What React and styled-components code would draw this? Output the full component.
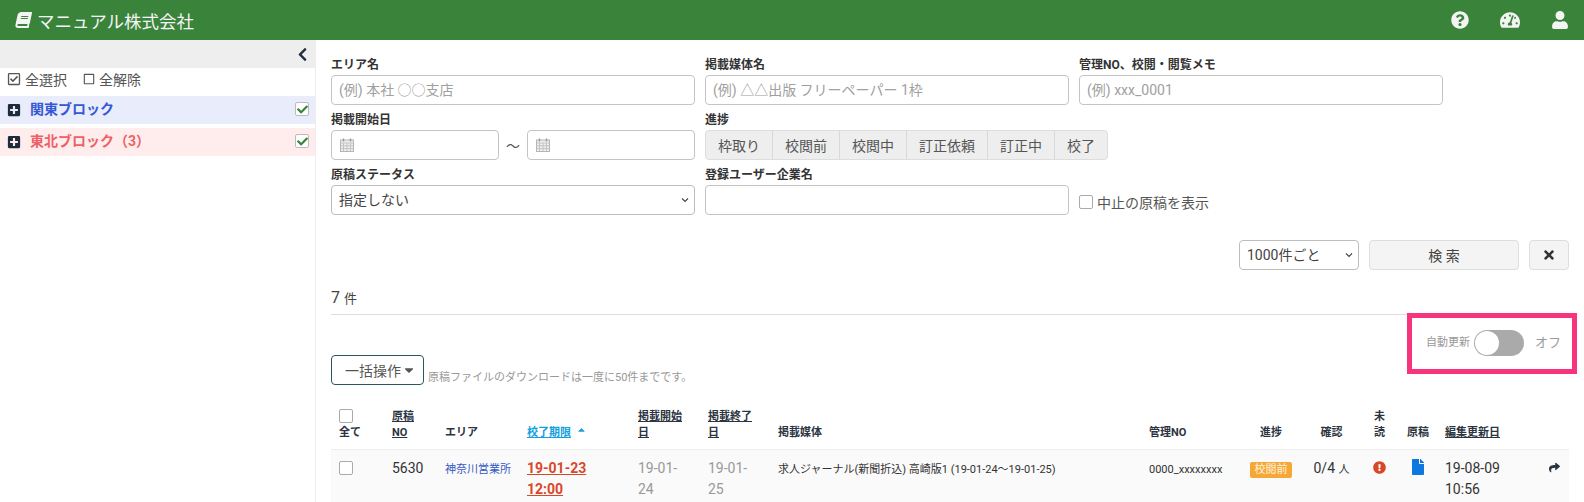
import styled, { createGlobalStyle } from "styled-components";
import {
  FaBook,
  FaCaretDown,
  FaCheck,
  FaChevronLeft,
  FaExclamationCircle,
  FaFile,
  FaPlusSquare,
  FaQuestionCircle,
  FaRegCheckSquare,
  FaRegSquare,
  FaShare,
  FaSortUp,
  FaTachometerAlt,
  FaTimes,
  FaUser,
} from "react-icons/fa";

const GlobalStyle = createGlobalStyle`
  html, body {
    margin: 0;
    padding: 0;
    background: #fff;
  }
  body, input, select, button {
    font-family: Roboto, "Noto Sans CJK JP", sans-serif;
  }
  * {
    box-sizing: border-box;
  }
`;

const Page = styled.div`
  width: 1584px;
  height: 502px;
  overflow: hidden;
  display: flex;
  flex-direction: column;
`;

const Header = styled.header`
  height: 40px;
  flex: none;
  background: #3a833b;
  color: #f4f4f4;
  display: flex;
  align-items: center;
  padding: 0 15px;
`;

const Brand = styled.div`
  display: flex;
  align-items: center;
  gap: 5px;
  font-size: 17.5px;
  flex: 1;

  svg {
    width: 17px;
    height: 16px;
    transform: skewX(-12deg);
  }
`;

const HeaderIcons = styled.div`
  display: flex;
  align-items: center;
  gap: 31px;
  font-size: 18px;

  svg {
    display: block;
  }
`;

const GaugeSlot = styled.span`
  font-size: 20px;
`;

const Body = styled.div`
  flex: 1;
  display: flex;
  min-height: 0;
`;

const Sidebar = styled.aside`
  width: 316px;
  flex: none;
  border-right: 1px solid #eee;
`;

const SidebarTop = styled.div`
  height: 28px;
  background: #eee;
  display: flex;
  align-items: center;
  justify-content: flex-end;
  padding-right: 5px;
  color: #1f2d3d;
  font-size: 15px;
`;

const SelectAllRow = styled.div`
  height: 28px;
  display: flex;
  align-items: center;
  gap: 16px;
  padding: 0 0 6px 7px;
  font-size: 14px;
  color: #555;
`;

const SelectAllItem = styled.span`
  display: flex;
  align-items: center;
  gap: 4px;
`;

const CheckedIcon = styled(FaRegCheckSquare)`
  font-size: 14px;
`;

const UncheckedIcon = styled(FaRegSquare)`
  font-size: 12px;
`;

const BlockRow = styled.div`
  height: 28px;
  margin-bottom: 4px;
  display: flex;
  align-items: center;
  padding: 0 6px 0 7px;
  background: ${({ $tone }) => ($tone === "red" ? "#ffeded" : "#e9ecfa")};
  color: ${({ $tone }) => ($tone === "red" ? "#ef5f68" : "#3558d4")};
  font-size: 14px;
  font-weight: 700;
`;

const PlusIcon = styled(FaPlusSquare)`
  color: #1d2b3a;
  font-size: 14px;
  margin-right: 9px;
`;

const BlockName = styled.span`
  flex: 1;
  padding-bottom: 4px;
`;

const GreenCheck = styled.span`
  width: 14px;
  height: 14px;
  margin-bottom: 2px;
  border: 1px solid #bbb;
  border-radius: 2px;
  background: #fff;
  display: flex;
  align-items: center;
  justify-content: center;
  color: #3a833b;
  font-size: 11px;
`;

const Main = styled.main`
  flex: 1;
  min-width: 0;
  padding: 15px 15px 0;
`;

const FilterGrid = styled.div`
  display: grid;
  grid-template-columns: 364px 364px 364px;
  column-gap: 10px;
  row-gap: 5px;
`;

const Field = styled.div`
  display: flex;
  flex-direction: column;
`;

const Label = styled.label`
  height: 20px;
  line-height: 19px;
  padding-top: 1px;
  font-size: 12px;
  font-weight: 700;
  color: #333;
`;

const TextInput = styled.input`
  width: 100%;
  height: 30px;
  border: 1px solid #c4c4c4;
  border-radius: 4px;
  padding: 0 7px;
  font-size: 14px;
  color: #444;
  background: #fff;

  &::placeholder {
    color: #a0a0a0;
  }
`;

const SelectFrame = styled.div`
  position: relative;
  height: 30px;
  width: ${({ $width }) => $width || "100%"};
`;

const SelectBox = styled.select`
  appearance: none;
  display: block;
  width: 100%;
  height: 30px;
  border: 1px solid #bdbdbd;
  border-radius: 4px;
  padding: 0 7px;
  font-size: 14px;
  color: #444;
  background: #fff;
`;

const SelectArrow = styled.svg`
  position: absolute;
  right: 6px;
  top: 12px;
  width: 8px;
  height: 6px;
  pointer-events: none;
`;

const Select = ({ width, label }) => (
  <SelectFrame $width={width}>
    <SelectBox>
      <option>{label}</option>
    </SelectBox>
    <SelectArrow viewBox="0 0 8 6" fill="none">
      <path d="M1 1.5l3 3 3-3" stroke="#444" strokeWidth="1.1" />
    </SelectArrow>
  </SelectFrame>
);

const DateRange = styled.div`
  display: flex;
  align-items: center;
`;

const DateBox = styled.div`
  flex: 1;
  height: 30px;
  border: 1px solid #c4c4c4;
  border-radius: 4px;
  display: flex;
  align-items: center;
  padding-left: 8px;
`;

const Tilde = styled.span`
  width: 28px;
  text-align: center;
  font-size: 14px;
  color: #555;
`;

const StepGroup = styled.div`
  display: flex;
  align-self: flex-start;
  width: max-content;
  height: 30px;
  border: 1px solid #ddd;
  border-radius: 4px;
  background: #eee;
  overflow: hidden;
`;

const Step = styled.span`
  flex: none;
  white-space: nowrap;
  padding: 0 12px;
  display: flex;
  align-items: center;
  font-size: 14px;
  color: #555;
  border-left: ${({ $first }) => ($first ? "0" : "1px solid #d8d8d8")};
`;

const CheckField = styled.div`
  display: flex;
  align-items: center;
  align-self: end;
  gap: 4px;
  height: 26px;
  font-size: 14px;
  color: #555;
`;

const EmptyBox = styled.span`
  display: block;
  flex: none;
  width: 14px;
  height: 14px;
  margin-top: ${({ $above }) => $above || "0"};
  margin-bottom: ${({ $below }) => $below || "0"};
  border: 1px solid #aaa;
  border-radius: 2px;
  background: #fff;
`;

const SearchRow = styled.div`
  margin-top: 25px;
  display: flex;
  justify-content: flex-end;
  gap: 10px;
`;

const SearchButton = styled.button`
  width: 150px;
  height: 30px;
  border: 1px solid #ddd;
  border-radius: 4px;
  background: #f4f4f4;
  font-size: 14px;
  color: #444;
`;

const ClearButton = styled.button`
  width: 40px;
  height: 30px;
  border: 1px solid #ddd;
  border-radius: 4px;
  background: #f4f4f4;
  color: #333;
  font-size: 14px;
  display: flex;
  align-items: center;
  justify-content: center;
`;

const CountRow = styled.div`
  height: 30px;
  margin-top: 15px;
  border-bottom: 1px solid #ddd;
  color: #444;
  font-size: 13px;
  line-height: 26px;
`;

const CountNumber = styled.span`
  font-size: 16px;
  margin-right: 4px;
`;

const AutoUpdate = styled.div`
  height: 40px;
  padding: 15px 8px 0 0;
  display: flex;
  justify-content: flex-end;
  position: relative;

  /* pink annotation drawn over the page */
  &::after {
    content: "";
    box-sizing: border-box;
    position: absolute;
    left: 1076px;
    top: -2px;
    width: 170px;
    height: 61px;
    border: 5px solid #f8347f;
  }
`;

const AutoLabel = styled.span`
  font-size: 11px;
  line-height: 26px;
  color: #999;
`;

const Toggle = styled.span`
  width: 50px;
  height: 26px;
  margin: 0 11px 0 4px;
  border-radius: 13px;
  background: #aaa;
  padding: 1px;
`;

const Knob = styled.span`
  display: block;
  width: 24px;
  height: 24px;
  border-radius: 50%;
  background: #fff;
`;

const OffLabel = styled.span`
  font-size: 13px;
  line-height: 26px;
  color: #999;
`;

const BulkRow = styled.div`
  display: flex;
  align-items: flex-end;
  gap: 4px;
`;

const BulkButton = styled.button`
  width: 93px;
  height: 30px;
  padding: 0 0 0 13px;
  border: 1px solid #2c5560;
  border-radius: 4px;
  background: #fff;
  color: #555;
  font-size: 14px;
  display: flex;
  align-items: center;
  gap: 1px;
`;

const BulkNote = styled.span`
  font-size: 11px;
  color: #999;
  line-height: 14px;
`;

const Table = styled.table`
  margin-top: 15px;
  width: 1238px;
  table-layout: fixed;
  border-collapse: collapse;
`;

const HeadCell = styled.th`
  padding: 9px ${({ $center }) => ($center ? "8px" : "0")} 8px ${({ $inset }) => $inset || "8px"};
  vertical-align: bottom;
  text-align: ${({ $center }) => ($center ? "center" : "left")};
  font-size: 11px;
  line-height: 16px;
  font-weight: 700;
  color: ${({ $active }) => ($active ? "#12a0dc" : "#2c3440")};
  border-bottom: 1px solid #eee;
  text-decoration: ${({ $sort }) => ($sort ? "underline" : "none")};

  svg {
    margin-left: 5px;
    vertical-align: -2px;
  }
`;

const SortLabel = styled.span`
  text-decoration: underline;
`;

const BodyRow = styled.tr`
  background: #fafafa;
`;

const Cell = styled.td`
  padding: ${({ $small }) => ($small ? "9px" : "8px")} ${({ $center }) => ($center ? "0" : "8px")} 8px;
  padding-left: ${({ $inset, $center }) => $inset || ($center ? "0" : "8px")};
  vertical-align: top;
  text-align: ${({ $center }) => ($center ? "center" : "left")};
  font-size: ${({ $small }) => ($small ? "11px" : "14px")};
  line-height: 21px;
  color: ${({ $muted }) => ($muted ? "#999" : "#333")};
`;

const AreaLink = styled.a`
  color: #3558c4;
`;

const Deadline = styled.a`
  color: #d9472b;
  font-weight: 700;
  text-decoration: underline;
`;

const Badge = styled.span`
  display: inline-block;
  width: 42px;
  height: 16px;
  line-height: 16px;
  margin-top: 4px;
  border-radius: 2px;
  background: #f5a838;
  color: #fff2d8;
  font-size: 11px;
  text-align: center;
`;

const Unit = styled.span`
  font-size: 11px;
`;

const AlertIcon = styled(FaExclamationCircle)`
  color: #d9472b;
  font-size: 13px;
  vertical-align: -1px;
`;

const FileIcon = styled(FaFile)`
  color: #0f78e0;
  font-size: 16px;
  vertical-align: -2px;
`;

const ShareIcon = styled(FaShare)`
  color: #2c3440;
  font-size: 11px;
`;

const CalendarIcon = () => (
  <svg width="14" height="14" viewBox="0 0 14 14" fill="none">
    <rect x="0.5" y="2" width="13" height="11.5" fill="#eee" stroke="#b5b5b5" />
    <path d="M0.5 5h13M0.5 7.8h13M0.5 10.6h13M3.5 5v8.5M7 5v8.5M10.5 5v8.5" stroke="#bbb" strokeWidth="0.8" />
    <path d="M3.5 0.5v3M10.5 0.5v3" stroke="#999" strokeWidth="1.4" />
  </svg>
);

const STEPS = ["枠取り", "校閲前", "校閲中", "訂正依頼", "訂正中", "校了"];
const COLUMN_WIDTHS = [53, 53, 82, 111, 70, 70, 371, 101, 58, 63, 33, 44, 100, 29];

export default function App() {
  return (
    <Page>
      <GlobalStyle />
      <Header>
        <Brand>
          <FaBook />
          マニュアル株式会社
        </Brand>
        <HeaderIcons>
          <FaQuestionCircle />
          <GaugeSlot>
            <FaTachometerAlt />
          </GaugeSlot>
          <FaUser />
        </HeaderIcons>
      </Header>
      <Body>
        <Sidebar>
          <SidebarTop>
            <FaChevronLeft />
          </SidebarTop>
          <SelectAllRow>
            <SelectAllItem>
              <CheckedIcon />
              全選択
            </SelectAllItem>
            <SelectAllItem>
              <UncheckedIcon />
              全解除
            </SelectAllItem>
          </SelectAllRow>
          <BlockRow>
            <PlusIcon />
            <BlockName>関東ブロック</BlockName>
            <GreenCheck>
              <FaCheck />
            </GreenCheck>
          </BlockRow>
          <BlockRow $tone="red">
            <PlusIcon />
            <BlockName>東北ブロック（3）</BlockName>
            <GreenCheck>
              <FaCheck />
            </GreenCheck>
          </BlockRow>
        </Sidebar>
        <Main>
          <FilterGrid>
            <Field>
              <Label>エリア名</Label>
              <TextInput placeholder="(例) 本社 ○○支店" />
            </Field>
            <Field>
              <Label>掲載媒体名</Label>
              <TextInput placeholder="(例) △△出版 フリーペーパー 1枠" />
            </Field>
            <Field>
              <Label>管理NO、校閲・閲覧メモ</Label>
              <TextInput placeholder="(例) xxx_0001" />
            </Field>
            <Field>
              <Label>掲載開始日</Label>
              <DateRange>
                <DateBox>
                  <CalendarIcon />
                </DateBox>
                <Tilde>〜</Tilde>
                <DateBox>
                  <CalendarIcon />
                </DateBox>
              </DateRange>
            </Field>
            <Field>
              <Label>進捗</Label>
              <StepGroup>
                {STEPS.map((step, i) => (
                  <Step key={step} $first={i === 0}>
                    {step}
                  </Step>
                ))}
              </StepGroup>
            </Field>
            <div />
            <Field>
              <Label>原稿ステータス</Label>
              <Select label="指定しない" />
            </Field>
            <Field>
              <Label>登録ユーザー企業名</Label>
              <TextInput />
            </Field>
            <CheckField>
              <EmptyBox />
              中止の原稿を表示
            </CheckField>
          </FilterGrid>

          <SearchRow>
            <Select width="120px" label="1000件ごと" />
            <SearchButton>検 索</SearchButton>
            <ClearButton>
              <FaTimes />
            </ClearButton>
          </SearchRow>

          <CountRow>
            <CountNumber>7</CountNumber>件
          </CountRow>

          <AutoUpdate>
            <AutoLabel>自動更新</AutoLabel>
            <Toggle>
              <Knob />
            </Toggle>
            <OffLabel>オフ</OffLabel>
          </AutoUpdate>

          <BulkRow>
            <BulkButton>
              一括操作
              <FaCaretDown />
            </BulkButton>
            <BulkNote>原稿ファイルのダウンロードは一度に50件までです。</BulkNote>
          </BulkRow>

          <Table>
            <colgroup>
              {COLUMN_WIDTHS.map((width, i) => (
                <col key={i} width={width} />
              ))}
            </colgroup>
            <thead>
              <tr>
                <HeadCell>
                  <EmptyBox $below="2px" />
                  全て
                </HeadCell>
                <HeadCell $sort>
                  原稿
                  <br />
                  NO
                </HeadCell>
                <HeadCell>エリア</HeadCell>
                <HeadCell $active>
                  <SortLabel>校了期限</SortLabel>
                  <FaSortUp />
                </HeadCell>
                <HeadCell $sort>
                  掲載開始
                  <br />日
                </HeadCell>
                <HeadCell $sort>
                  掲載終了
                  <br />日
                </HeadCell>
                <HeadCell>掲載媒体</HeadCell>
                <HeadCell>管理NO</HeadCell>
                <HeadCell $center>進捗</HeadCell>
                <HeadCell $center>確認</HeadCell>
                <HeadCell $center>未読</HeadCell>
                <HeadCell $center>原稿</HeadCell>
                <HeadCell $sort $inset="5px">
                  編集更新日
                </HeadCell>
                <HeadCell />
              </tr>
            </thead>
            <tbody>
              <BodyRow>
                <Cell>
                  <EmptyBox $above="3px" />
                </Cell>
                <Cell>5630</Cell>
                <Cell $small>
                  <AreaLink>神奈川営業所</AreaLink>
                </Cell>
                <Cell>
                  <Deadline>
                    19-01-23
                    <br />
                    12:00
                  </Deadline>
                </Cell>
                <Cell $muted>19-01-24</Cell>
                <Cell $muted>19-01-25</Cell>
                <Cell $small>求人ジャーナル(新聞折込) 高崎版1 (19-01-24〜19-01-25)</Cell>
                <Cell $small>0000_xxxxxxxx</Cell>
                <Cell $center>
                  <Badge>校閲前</Badge>
                </Cell>
                <Cell $center>
                  0/4 <Unit>人</Unit>
                </Cell>
                <Cell $center>
                  <AlertIcon />
                </Cell>
                <Cell $center>
                  <FileIcon />
                </Cell>
                <Cell $inset="5px">
                  19-08-09
                  <br />
                  10:56
                </Cell>
                <Cell $center>
                  <ShareIcon />
                </Cell>
              </BodyRow>
            </tbody>
          </Table>
        </Main>
      </Body>
    </Page>
  );
}
